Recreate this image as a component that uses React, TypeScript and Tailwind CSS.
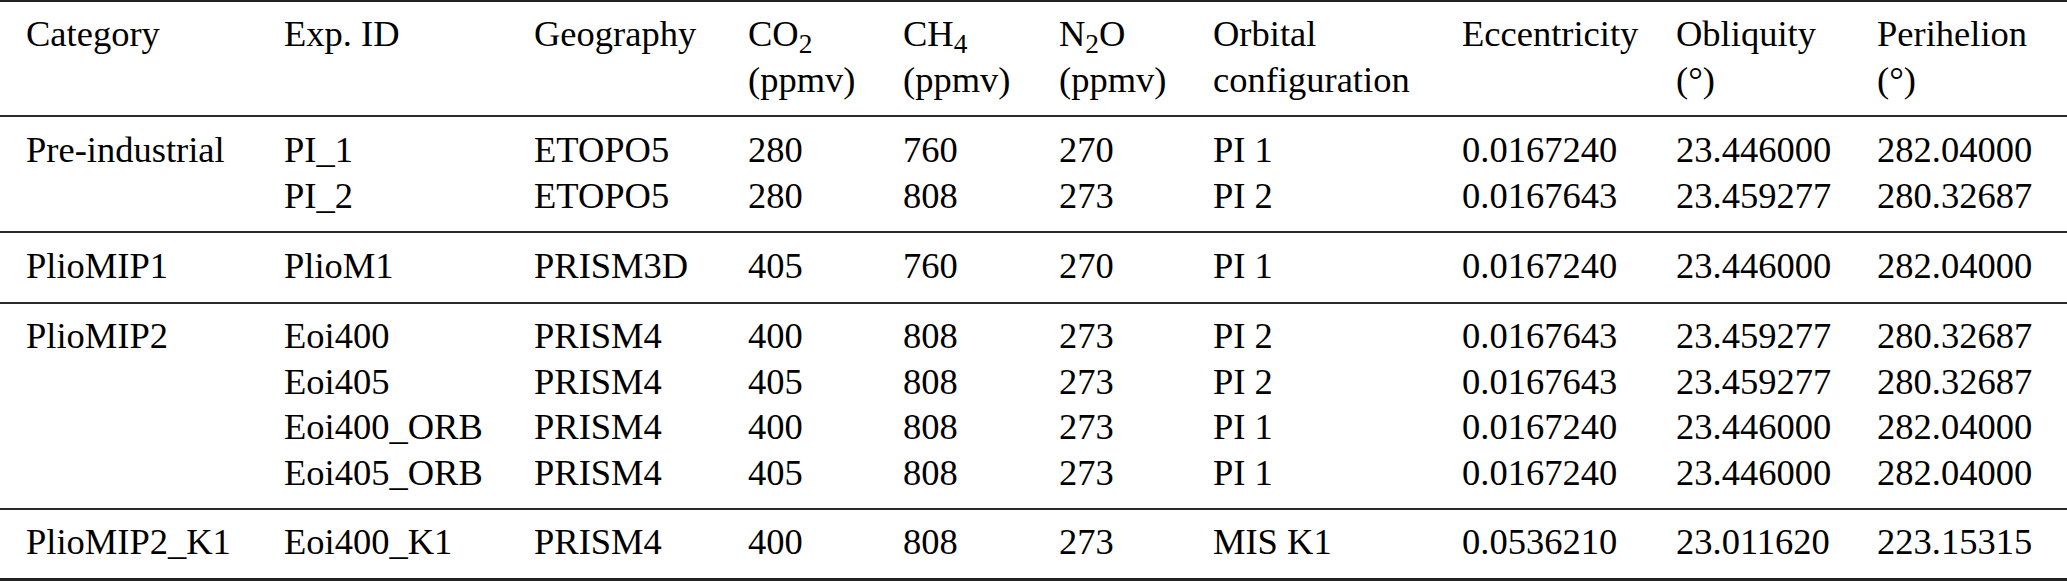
import React from "react";

type Row = string[];
type Group = { rows: Row[]; pt: string; pb: string };

const Sub = ({ children }: { children: React.ReactNode }) => <sub>{children}</sub>;

const header: React.ReactNode[][] = [
  [
    "Category",
    "Exp. ID",
    "Geography",
    <span key="co2">CO<Sub>2</Sub></span>,
    <span key="ch4">CH<Sub>4</Sub></span>,
    <span key="n2o">N<Sub>2</Sub>O</span>,
    "Orbital",
    "Eccentricity",
    "Obliquity",
    "Perihelion",
  ],
  ["", "", "", "(ppmv)", "(ppmv)", "(ppmv)", "configuration", "", "(°)", "(°)"],
];

const groups: Group[] = [
  {
    pt: "pt-[10px]",
    pb: "pb-[13px]",
    rows: [
      ["Pre-industrial", "PI_1", "ETOPO5", "280", "760", "270", "PI 1", "0.0167240", "23.446000", "282.04000"],
      ["", "PI_2", "ETOPO5", "280", "808", "273", "PI 2", "0.0167643", "23.459277", "280.32687"],
    ],
  },
  {
    pt: "pt-[10px]",
    pb: "pb-[13.5px]",
    rows: [["PlioMIP1", "PlioM1", "PRISM3D", "405", "760", "270", "PI 1", "0.0167240", "23.446000", "282.04000"]],
  },
  {
    pt: "pt-[9px]",
    pb: "pb-[13px]",
    rows: [
      ["PlioMIP2", "Eoi400", "PRISM4", "400", "808", "273", "PI 2", "0.0167643", "23.459277", "280.32687"],
      ["", "Eoi405", "PRISM4", "405", "808", "273", "PI 2", "0.0167643", "23.459277", "280.32687"],
      ["", "Eoi400_ORB", "PRISM4", "400", "808", "273", "PI 1", "0.0167240", "23.446000", "282.04000"],
      ["", "Eoi405_ORB", "PRISM4", "405", "808", "273", "PI 1", "0.0167240", "23.446000", "282.04000"],
    ],
  },
  {
    pt: "pt-[9px]",
    pb: "pb-[13.5px]",
    rows: [["PlioMIP2_K1", "Eoi400_K1", "PRISM4", "400", "808", "273", "MIS K1", "0.0536210", "23.011620", "223.15315"]],
  },
];

const gridCls =
  "grid grid-cols-[258px_250px_214px_155px_156px_154px_249px_214px_201px_1fr] pl-[26px] leading-[45.5px]";

function Cells({ rows }: { rows: React.ReactNode[][] }) {
  return (
    <div className={gridCls}>
      {rows.map((r, i) =>
        r.map((c, j) => (
          <div key={`${i}-${j}`} className="whitespace-nowrap">
            {c}
          </div>
        ))
      )}
    </div>
  );
}

export default function App() {
  return (
    <div className="w-[2067px] h-[581px] bg-white text-black text-[36.5px] overflow-hidden font-['Liberation_Serif','Times_New_Roman','DejaVu_Serif',serif]">
      <div className="border-t-2 border-b-[3px] border-[#222222]">
        <div className="pt-[9px] pb-[13px]">
          <Cells rows={header} />
        </div>
        {groups.map((g, i) => (
          <div key={i} className={`border-t-2 border-[#2a2a2a] ${g.pt} ${g.pb}`}>
            <Cells rows={g.rows} />
          </div>
        ))}
      </div>
    </div>
  );
}
